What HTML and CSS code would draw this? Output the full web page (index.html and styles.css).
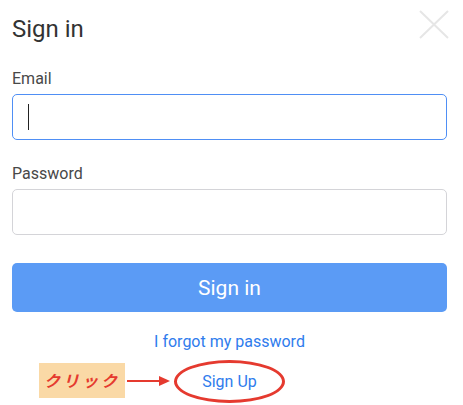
FILE: index.html
```html
<!DOCTYPE html>
<html lang="ja">
<head>
    <meta charset="UTF-8">
    <meta name="viewport" content="width=device-width, initial-scale=1.0">
    <title>Sign in</title>
    <link rel="stylesheet" href="styles.css">
</head>
<body>
    <div class="dialog">
        <div class="header">
            <h1 class="title">Sign in</h1>
            <svg class="close" width="30" height="29" viewBox="0 0 30 29">
                <path d="M1 1 L29 28 M29 1 L1 28" stroke="#e6e6e6" stroke-width="2" fill="none"/>
            </svg>
        </div>

        <div class="field">
            <label for="email">Email</label>
            <div class="input focused"><span class="caret"></span></div>
        </div>

        <div class="field">
            <label for="password">Password</label>
            <div class="input"></div>
        </div>

        <button class="submit">Sign in</button>

        <a class="forgot" href="#">I forgot my password</a>

        <div class="signup-row">
            <!-- annotation -->
            <span class="note">クリック</span>
            <svg class="arrow" width="44" height="12" viewBox="0 0 44 12">
                <line x1="0" y1="6" x2="34" y2="6" stroke="#e53a2f" stroke-width="2"/>
                <polygon points="32,1 43,6 32,11" fill="#e53a2f"/>
            </svg>
            <a class="signup" href="#">Sign Up</a>
        </div>
    </div>
</body>
</html>
```

FILE: styles.css
```css
body {
    margin: 0;
    background: #fff;
    font-family: Roboto, "Liberation Sans", Arial, sans-serif;
}
.dialog {
    padding: 10px 16px 0 12px;
}
.header {
    display: flex;
    justify-content: space-between;
    align-items: flex-start;
}
.title {
    margin: 5px 0 0 0;
    font-size: 24px;
    line-height: 28px;
    font-weight: 400;
    color: #333;
}
.close {
    display: block;
    margin-right: -2px;
}
.field {
    margin-top: 26px;
}
.field + .field {
    margin-top: 24px;
}
.field label {
    display: block;
    font-size: 16px;
    line-height: 20px;
    color: #484848;
}
.input {
    margin-top: 5px;
    height: 44px;
    border: 1px solid #d4d4d8;
    border-radius: 5px;
    position: relative;
}
.input.focused {
    border-color: #4f8ff5;
}
.caret {
    position: absolute;
    left: 15px;
    top: 9px;
    width: 1px;
    height: 26px;
    background: #222;
}
.submit {
    display: block;
    width: 100%;
    margin-top: 28px;
    height: 49px;
    border: none;
    border-radius: 5px;
    background: #5b9bf5;
    color: #fff;
    font-family: inherit;
    font-size: 21px;
    cursor: pointer;
}
.forgot {
    display: block;
    margin-top: 20px;
    text-align: center;
    font-size: 16px;
    line-height: 20px;
    color: #2f7ced;
    text-decoration: none;
}
.signup-row {
    position: relative;
    margin-top: 8px;
    text-align: center;
}
.signup {
    display: inline-block;
    height: 37px;
    line-height: 37px;
    padding: 0 25px;
    border: 3px solid #e53a2f;
    border-radius: 50%;
    font-size: 16px;
    color: #2f7ced;
    text-decoration: none;
}
.note {
    position: absolute;
    left: 27px;
    top: 3px;
    width: 86px;
    height: 35px;
    line-height: 35px;
    background: #fad9a6;
    color: #e53a2f;
    font-family: "Noto Sans CJK JP", sans-serif;
    font-weight: 700;
    font-size: 16px;
    letter-spacing: 3px;
    font-style: italic;
    text-align: center;
}
.arrow {
    position: absolute;
    left: 115px;
    top: 15px;
}
```
